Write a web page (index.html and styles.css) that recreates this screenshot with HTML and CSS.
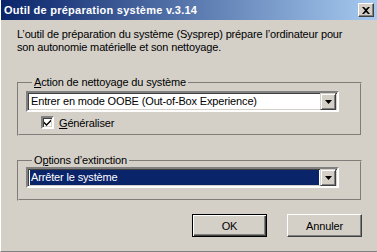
FILE: index.html
```html
<!DOCTYPE html>
<html lang="fr">
<head>
  <meta charset="UTF-8" />
  <title>Outil de préparation système v.3.14</title>
  <link rel="stylesheet" href="styles.css">
</head>
<body>

<div class="window">
  <div class="titlebar">
    <span class="title">Outil de préparation système v.3.14</span>
    <span class="close">
      <svg width="8" height="7" viewBox="0 0 8 7"><path d="M0 0h2l2 2 2-2h2L5 3.5 8 7H6L4 5 2 7H0l3-3.5z" fill="#000"/></svg>
    </span>
  </div>

  <div class="content">
    <p class="intro">L’outil de préparation du système (Sysprep) prépare l’ordinateur pour<br>son autonomie matérielle et son nettoyage.</p>

    <!-- Action -->
    <fieldset class="group">
      <legend><u>A</u>ction de nettoyage du système</legend>
      <div class="combo">
        <span class="combo-value">Entrer en mode OOBE (Out-of-Box Experience)</span>
        <span class="combo-btn"><svg width="7" height="4" viewBox="0 0 7 4"><path d="M0 0h7L3.5 4z" fill="#000"/></svg></span>
      </div>
      <label class="check">
        <span class="box"><svg width="9" height="9" viewBox="0 0 9 9"><path d="M1 3.5l2.5 2.5L8 1.5v2L3.5 8 1 5.5z" fill="#000"/></svg></span>
        <span><u>G</u>énéraliser</span>
      </label>
    </fieldset>

    <!-- Extinction -->
    <fieldset class="group group-last">
      <legend>O<u>p</u>tions d’extinction</legend>
      <div class="combo">
        <span class="combo-value selected">Arrêter le système</span>
        <span class="combo-btn"><svg width="7" height="4" viewBox="0 0 7 4"><path d="M0 0h7L3.5 4z" fill="#000"/></svg></span>
      </div>
    </fieldset>

    <div class="buttons">
      <span class="btn default"><span>OK</span></span>
      <span class="btn"><span>Annuler</span></span>
    </div>
  </div>
</div>

</body>
</html>
```

FILE: styles.css
```css
* { box-sizing: border-box; }
body {
  margin: 0;
  background: #d4d0c8;
  font-family: 'Liberation Sans', Arial, sans-serif;
  font-size: 11px;
  letter-spacing: -0.15px;
  color: #000;
}

.window {
  width: 377px;
  height: 252px;
  background: #d4d0c8;
  border-left: 1px solid #fff;
  border-bottom: 1px solid #808080;
  display: flex;
  flex-direction: column;
}

.titlebar {
  height: 20px;
  background: linear-gradient(to right, #0a246a, #a6caf0);
  display: flex;
  align-items: center;
  justify-content: space-between;
  padding: 0 3px;
}

.title {
  color: #fff;
  font-weight: bold;
  font-size: 11px;
  letter-spacing: 0.25px;
}

.close {
  width: 16px;
  height: 14px;
  background: #d4d0c8;
  border: 1px solid;
  border-color: #fff #404040 #404040 #fff;
  box-shadow: inset -1px -1px 0 #808080;
  display: flex;
  align-items: center;
  justify-content: center;
}

.content {
  padding: 8px 15px 0 16px;
}

.intro {
  margin: 0;
  line-height: 13px;
}

.group {
  margin: 22px 0 0 0;
  width: 345px;
  border: 2px groove #d4d0c8;
  padding: 2px 6px 5px 7px;
}

.group-last {
  margin-top: 18px;
  padding-top: 0;
  padding-bottom: 11px;
}

.group legend {
  padding: 0 2px;
  margin-left: 6px;
  line-height: 13px;
}

.combo {
  width: 313px;
  height: 21px;
  background: #fff;
  border: 2px solid;
  border-color: #808080 #fff #fff #808080;
  box-shadow: inset 1px 1px 0 #404040, inset -1px -1px 0 #d4d0c8;
  display: flex;
  align-items: center;
  padding: 2px;
}

.combo-value {
  flex: 1;
  height: 15px;
  line-height: 15px;
  padding-left: 1px;
}

.combo-value.selected {
  background: #0a246a;
  color: #fff;
  margin-right: 1px;
}

.combo-btn {
  width: 16px;
  height: 17px;
  margin: -1px -1px -1px 0;
  background: #d4d0c8;
  border: 1px solid;
  border-color: #d4d0c8 #404040 #404040 #d4d0c8;
  box-shadow: inset 1px 1px 0 #fff, inset -1px -1px 0 #808080;
  display: flex;
  align-items: center;
  justify-content: center;
}

.check {
  display: flex;
  align-items: center;
  gap: 5px;
  margin: 4px 0 0 15px;
}

.box {
  width: 13px;
  height: 13px;
  background: #fff;
  border: 2px solid;
  border-color: #808080 #fff #fff #808080;
  box-shadow: inset 1px 1px 0 #404040, inset -1px -1px 0 #d4d0c8;
  display: flex;
  align-items: center;
  justify-content: center;
}

.box svg { margin: 0 0 0 -1px; }

.buttons {
  display: flex;
  justify-content: flex-end;
  gap: 20px;
  margin-top: 13px;
  width: 345px;
}

.btn {
  width: 75px;
  height: 23px;
  background: #d4d0c8;
  border: 1px solid;
  border-color: #fff #404040 #404040 #fff;
  box-shadow: inset -1px -1px 0 #808080;
  display: flex;
  align-items: center;
  justify-content: center;
}

.btn.default {
  border: 1px solid #000;
  box-shadow: inset 1px 1px 0 #fff, inset -1px -1px 0 #404040, inset -2px -2px 0 #808080;
}
```
